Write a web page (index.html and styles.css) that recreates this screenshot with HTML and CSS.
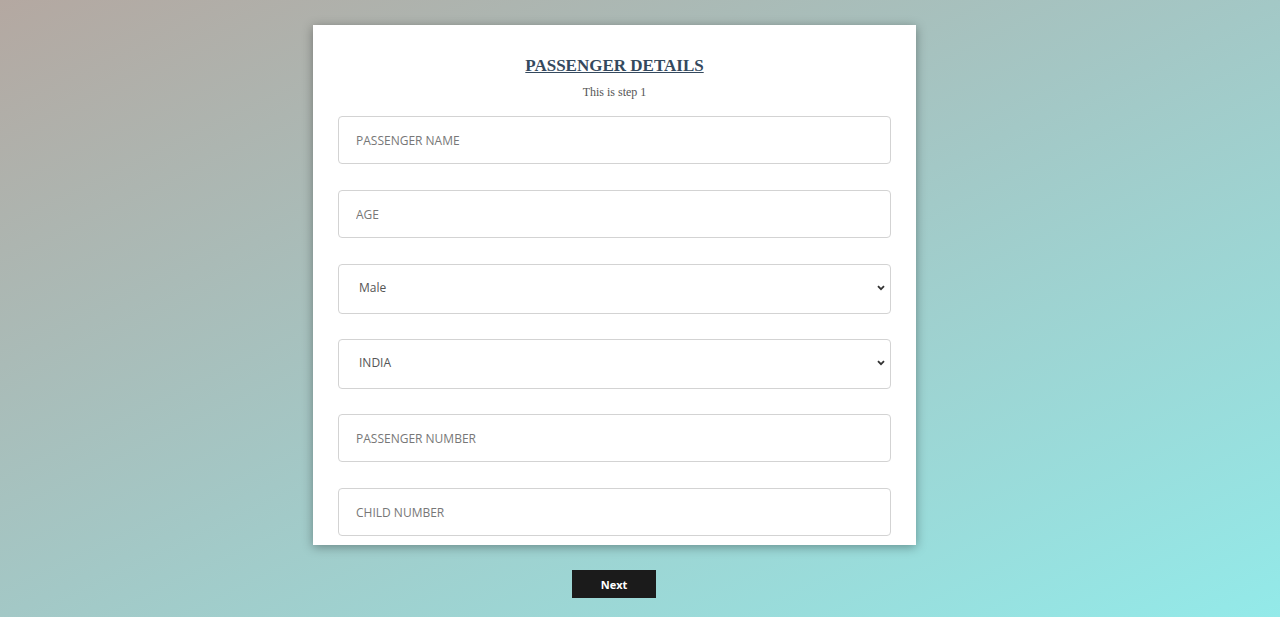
FILE: index.html
```html
<!DOCTYPE html>
<html>
<head>
<meta charset="utf-8">
<link rel="stylesheet" href="styles.css">
</head>
<body>
<main class="page">
  <form class="card">
    <h2 class="title">PASSENGER DETAILS</h2>
    <p class="subtitle">This is step 1</p>
    <input class="field" type="text" placeholder="PASSENGER NAME">
    <input class="field" type="text" placeholder="AGE">
    <div class="select-wrap">
      <select class="field select">
        <option>Male</option>
      </select>
      <svg class="chevron" width="8" height="6" viewBox="0 0 8 6"><path d="M1 1.2 L4 4.2 L7 1.2" fill="none" stroke="#333" stroke-width="1.8"/></svg>
    </div>
    <div class="select-wrap">
      <select class="field select">
        <option>INDIA</option>
      </select>
      <svg class="chevron" width="8" height="6" viewBox="0 0 8 6"><path d="M1 1.2 L4 4.2 L7 1.2" fill="none" stroke="#333" stroke-width="1.8"/></svg>
    </div>
    <input class="field" type="text" placeholder="PASSENGER NUMBER">
    <input class="field" type="text" placeholder="CHILD NUMBER">
  </form>
  <button class="next" type="button">Next</button>
</main>
</body>
</html>
```
FILE: styles.css
```css
html, body {
  margin: 0;
  height: 100%;
}
body {
  background: linear-gradient(to bottom right, #b4a8a1 0%, #a3c8c6 50%, #93eae9 100%);
  font-family: "Liberation Serif", serif;
  overflow: hidden;
}
.page {
  display: flex;
  flex-direction: column;
  align-items: center;
  padding-top: 25px;
}
.card {
  box-sizing: border-box;
  width: 603px;
  height: 520px;
  margin-right: 51px;
  background: #fff;
  padding: 31px 25px 0;
  box-shadow: 0 2px 10px rgba(0, 0, 0, 0.35);
  display: flex;
  flex-direction: column;
  overflow: hidden;
}
.title {
  margin: 0;
  text-align: center;
  font-size: 17px;
  font-weight: bold;
  color: #34495e;
  text-decoration: underline;
  line-height: 20px;
}
.subtitle {
  margin: 9px 0 17px;
  text-align: center;
  font-size: 12px;
  color: #555;
  line-height: 14px;
}
.field {
  box-sizing: border-box;
  width: 553px;
  height: 48px;
  margin-bottom: 26px;
  border: 1px solid #d3d3d3;
  border-radius: 4px;
  padding: 0 17px;
  font-family: "Open Sans", sans-serif;
  font-size: 12px;
  color: #555;
  background: #fff;
  outline: none;
  flex-shrink: 0;
}
.field::placeholder {
  color: #777;
}
.select-wrap {
  position: relative;
  flex-shrink: 0;
  height: 50px;
  margin-bottom: 25px;
}
.select {
  -webkit-appearance: none;
  appearance: none;
  height: 50px;
  margin: 0;
  padding: 0 17px 3px 20px;
  color: #555;
}
.chevron {
  position: absolute;
  right: 6px;
  top: 21px;
  pointer-events: none;
}
.next {
  margin-top: 25px;
  margin-right: 52px;
  width: 84px;
  height: 28px;
  border: none;
  background: #1b1b1b;
  color: #fff;
  font-family: "Open Sans", sans-serif;
  font-weight: bold;
  font-size: 11px;
  cursor: pointer;
}
```
